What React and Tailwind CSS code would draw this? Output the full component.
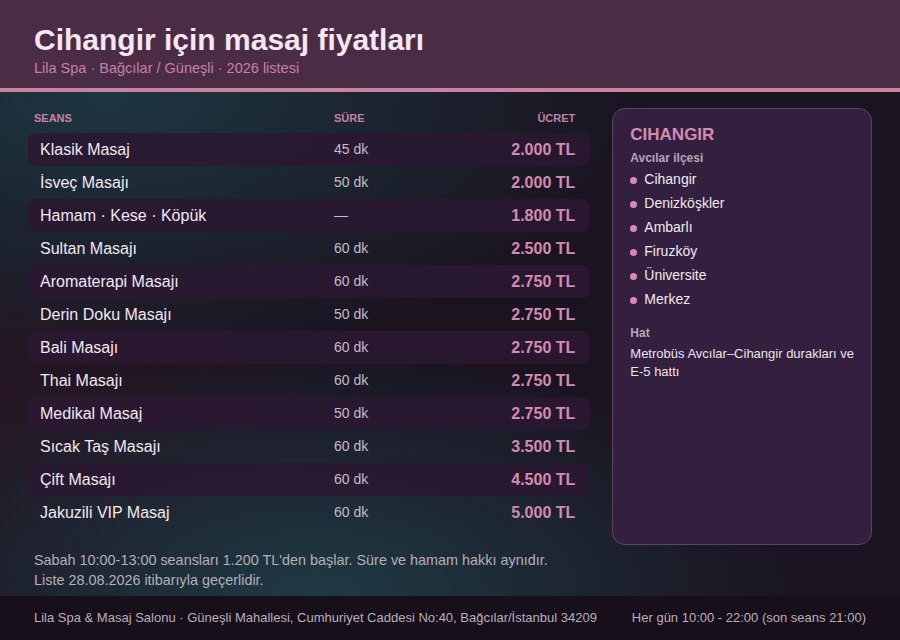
const ROWS = [
  { name: 'Klasik Masaj', time: '45 dk', price: '2.000 TL' },
  { name: 'İsveç Masajı', time: '50 dk', price: '2.000 TL' },
  { name: 'Hamam · Kese · Köpük', time: '—', price: '1.800 TL' },
  { name: 'Sultan Masajı', time: '60 dk', price: '2.500 TL' },
  { name: 'Aromaterapi Masajı', time: '60 dk', price: '2.750 TL' },
  { name: 'Derin Doku Masajı', time: '50 dk', price: '2.750 TL' },
  { name: 'Bali Masajı', time: '60 dk', price: '2.750 TL' },
  { name: 'Thai Masajı', time: '60 dk', price: '2.750 TL' },
  { name: 'Medikal Masaj', time: '50 dk', price: '2.750 TL' },
  { name: 'Sıcak Taş Masajı', time: '60 dk', price: '3.500 TL' },
  { name: 'Çift Masajı', time: '60 dk', price: '4.500 TL' },
  { name: 'Jakuzili VIP Masaj', time: '60 dk', price: '5.000 TL' },
];

const AREAS = ['Cihangir', 'Denizköşkler', 'Ambarlı', 'Firuzköy', 'Üniversite', 'Merkez'];

export default function App() {
  return (
    <div className="w-[900px] h-[640px] flex flex-col overflow-hidden font-['Liberation_Sans',Arial,sans-serif] bg-[#1a1320]">
      {/* başlık */}
      <header className="h-[92px] shrink-0 bg-[#4a2d44] border-b-4 border-[#c9839f] px-[34px] pt-[23px]">
        <h1 className="text-[30px] leading-[34px] font-bold text-[#f6e6f0]">Cihangir için masaj fiyatları</h1>
        <p className="text-[14.5px] leading-[20px] mt-[1px] text-[#c581a5]">Lila Spa · Bağcılar / Güneşli · 2026 listesi</p>
      </header>

      <main className="flex-1 flex flex-col bg-[radial-gradient(ellipse_60%_55%_at_12%_0%,#1d3640_0%,transparent_100%),radial-gradient(ellipse_55%_50%_at_35%_100%,#1f3a43_0%,transparent_100%),radial-gradient(ellipse_40%_40%_at_0%_62%,#261624_0%,transparent_100%)]">
        <div className="flex gap-[22px] px-[28px] pt-[16px]">
          {/* fiyat tablosu */}
          <div className="w-[563px]">
            <div className="flex items-center h-[20px] px-[6px] text-[11px] font-bold text-[#c581a5] uppercase">
              <span className="w-[300px]">Seans</span>
              <span className="flex-1">Süre</span>
              <span className="pr-[9px]">Ücret</span>
            </div>
            <div className="mt-[5px]">
              {ROWS.map((r, i) => (
                <div
                  key={r.name}
                  className={`flex items-center h-[33px] pl-[12px] pr-[15px] rounded-[8px] ${i % 2 === 0 ? 'bg-[#2a1831]/90' : ''}`}
                >
                  <span className="w-[294px] text-[16px] text-[#f2e8f0]">{r.name}</span>
                  <span className="flex-1 text-[14px] text-[#c6bac6]">{r.time}</span>
                  <span className="text-[16px] font-bold text-[#d68aae]">{r.price}</span>
                </div>
              ))}
            </div>
          </div>

          {/* semt kartı */}
          <aside className="w-[260px] h-[437px] rounded-[13px] border border-[#5a4468] bg-[#33203f] pl-[17px] pr-[10px] pt-[15px]">
            <h2 className="text-[17px] leading-[22px] font-bold text-[#d68aae]">CIHANGIR</h2>
            <p className="mt-[4px] text-[12px] leading-[16px] font-bold text-[#b7a6b6]">Avcılar ilçesi</p>
            <ul className="mt-[1px]">
              {AREAS.map((a) => (
                <li key={a} className="flex items-center gap-[7px] h-[24px] text-[14px] text-[#f2e8f0]">
                  <span className="w-[7px] h-[7px] rounded-full bg-[#d68aae] mt-[2px]" />
                  {a}
                </li>
              ))}
            </ul>
            <p className="mt-[14px] text-[12px] leading-[16px] font-bold text-[#b7a6b6]">Hat</p>
            <p className="mt-[4px] text-[13px] leading-[18px] text-[#ece2ea]">
              Metrobüs Avcılar–Cihangir durakları ve E-5 hattı
            </p>
          </aside>
        </div>

        <div className="px-[34px] mt-[5px] text-[14.4px] leading-[20px] text-[#b4b0b8]">
          <p>Sabah 10:00-13:00 seansları 1.200 TL'den başlar. Süre ve hamam hakkı aynıdır.</p>
          <p>Liste 28.08.2026 itibarıyla geçerlidir.</p>
        </div>
      </main>

      <footer className="h-[44px] shrink-0 bg-[#170f1a] flex items-center justify-between pl-[34px] pr-[34px] text-[13px] text-[#b8b0ba]">
        <span>Lila Spa &amp; Masaj Salonu · Güneşli Mahallesi, Cumhuriyet Caddesi No:40, Bağcılar/İstanbul 34209</span>
        <span>Her gün 10:00 - 22:00 (son seans 21:00)</span>
      </footer>
    </div>
  );
}
